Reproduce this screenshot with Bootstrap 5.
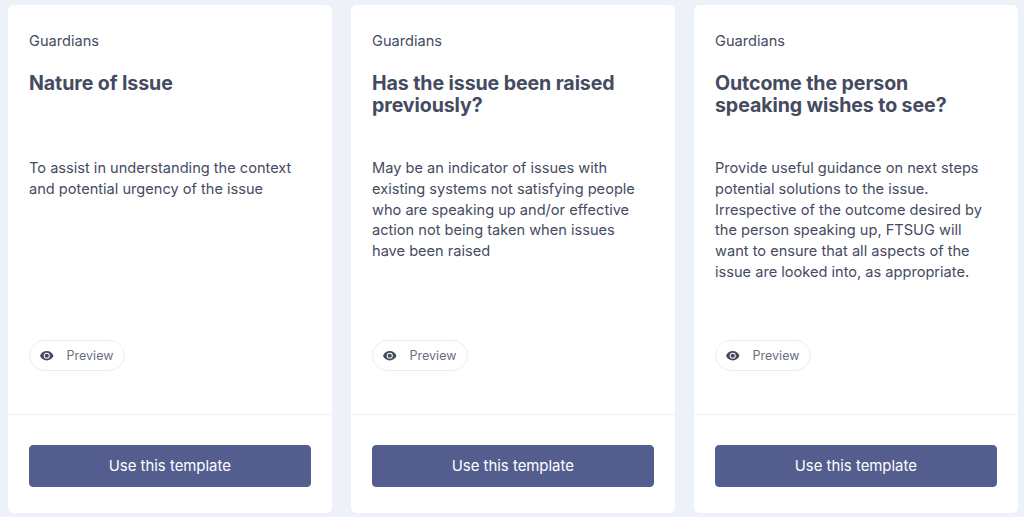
<!DOCTYPE html>
<html lang="en">
<head>
<meta charset="utf-8">
<title>Templates</title>
<link href="https://cdn.jsdelivr.net/npm/bootstrap@5.3.0/dist/css/bootstrap.min.css" rel="stylesheet">
<style>
html,body{height:517px;overflow:hidden}
body{background:#edf1f8;font-family:Inter,"Open Sans",sans-serif;color:#454b5f}
.tpl-wrap{padding:5px 6px 4px 8px;gap:19px;height:517px}
.tpl-card{width:324.33px;height:508px;background:#fff;border:0;border-radius:6px;box-shadow:none}
.tpl-main{height:409px;padding:26px 21px 0;display:flex;flex-direction:column}
.tpl-cat{font-size:14.6px;line-height:20px;color:#454b5f;margin-bottom:21px}
.tpl-title{font-size:19.6px;line-height:22px;font-weight:700;color:#454b5f;height:44px;margin:0 0 42px;letter-spacing:-.1px}
.tpl-text{font-size:14.6px;line-height:20.8px;color:#454b5f;height:182px;margin:0;padding-right:5px}
.tpl-preview{width:95.5px;height:31px;padding:0;border:1px solid #e9ecf3;border-radius:16px;background:#fff;color:#6a6f80;font-size:12.5px;gap:13px;flex:none}
.tpl-preview svg{width:13.5px;height:13.5px;fill:#454b5f}
.tpl-preview span{padding-top:1px}
.tpl-foot{border-top:1px solid #eef1f7;padding:29.5px 21.33px 0 21px}
.tpl-btn{height:42.5px;background:#535e8f;border:1px solid #535e8f;border-radius:4px;color:#fff;font-size:14.9px;padding:1px 0 0;width:100%}
.tpl-btn:hover{background:#535e8f;color:#fff}
</style>
</head>
<body>
<div class="d-flex tpl-wrap">
  <div class="card tpl-card">
    <div class="tpl-main">
      <div class="tpl-cat">Guardians</div>
      <h5 class="tpl-title">Nature of Issue</h5>
      <p class="tpl-text">To assist in understanding the context and potential urgency of the issue</p>
      <button type="button" class="btn d-flex align-items-center justify-content-center tpl-preview"><svg viewBox="0 0 16 16"><path fill-rule="evenodd" d="M8 2.4C4.4 2.4 1.3 4.8 0 8c1.3 3.2 4.400 5.600 8 5.600s6.700-2.400 8-5.600c-1.300-3.200-4.400-5.600-8-5.600zM8 11.600a3.600 3.600 0 1 1 0-7.200 3.600 3.600 0 0 1 0 7.200z"/><circle cx="8" cy="8" r="2.500"/></svg><span>Preview</span></button>
    </div>
    <div class="tpl-foot"><button type="button" class="btn tpl-btn">Use this template</button></div>
  </div>
  <div class="card tpl-card">
    <div class="tpl-main">
      <div class="tpl-cat">Guardians</div>
      <h5 class="tpl-title">Has the issue been raised previously?</h5>
      <p class="tpl-text">May be an indicator of issues with existing systems not satisfying people who are speaking up and/or effective action not being taken when issues have been raised</p>
      <button type="button" class="btn d-flex align-items-center justify-content-center tpl-preview"><svg viewBox="0 0 16 16"><path fill-rule="evenodd" d="M8 2.4C4.4 2.4 1.3 4.8 0 8c1.3 3.2 4.400 5.600 8 5.600s6.700-2.400 8-5.600c-1.300-3.200-4.400-5.600-8-5.600zM8 11.600a3.600 3.600 0 1 1 0-7.200 3.600 3.600 0 0 1 0 7.200z"/><circle cx="8" cy="8" r="2.500"/></svg><span>Preview</span></button>
    </div>
    <div class="tpl-foot"><button type="button" class="btn tpl-btn">Use this template</button></div>
  </div>
  <div class="card tpl-card">
    <div class="tpl-main">
      <div class="tpl-cat">Guardians</div>
      <h5 class="tpl-title">Outcome the person speaking wishes to see?</h5>
      <p class="tpl-text">Provide useful guidance on next steps potential solutions to the issue. Irrespective of the outcome desired by the person speaking up, FTSUG will want to ensure that all aspects of the issue are looked into, as appropriate.</p>
      <button type="button" class="btn d-flex align-items-center justify-content-center tpl-preview"><svg viewBox="0 0 16 16"><path fill-rule="evenodd" d="M8 2.4C4.4 2.4 1.3 4.8 0 8c1.3 3.2 4.400 5.600 8 5.600s6.700-2.400 8-5.600c-1.300-3.200-4.400-5.600-8-5.600zM8 11.600a3.600 3.600 0 1 1 0-7.200 3.600 3.600 0 0 1 0 7.200z"/><circle cx="8" cy="8" r="2.500"/></svg><span>Preview</span></button>
    </div>
    <div class="tpl-foot"><button type="button" class="btn tpl-btn">Use this template</button></div>
  </div>
</div>
<script src="https://cdn.jsdelivr.net/npm/bootstrap@5.3.0/dist/js/bootstrap.bundle.min.js"></script>
</body>
</html>
